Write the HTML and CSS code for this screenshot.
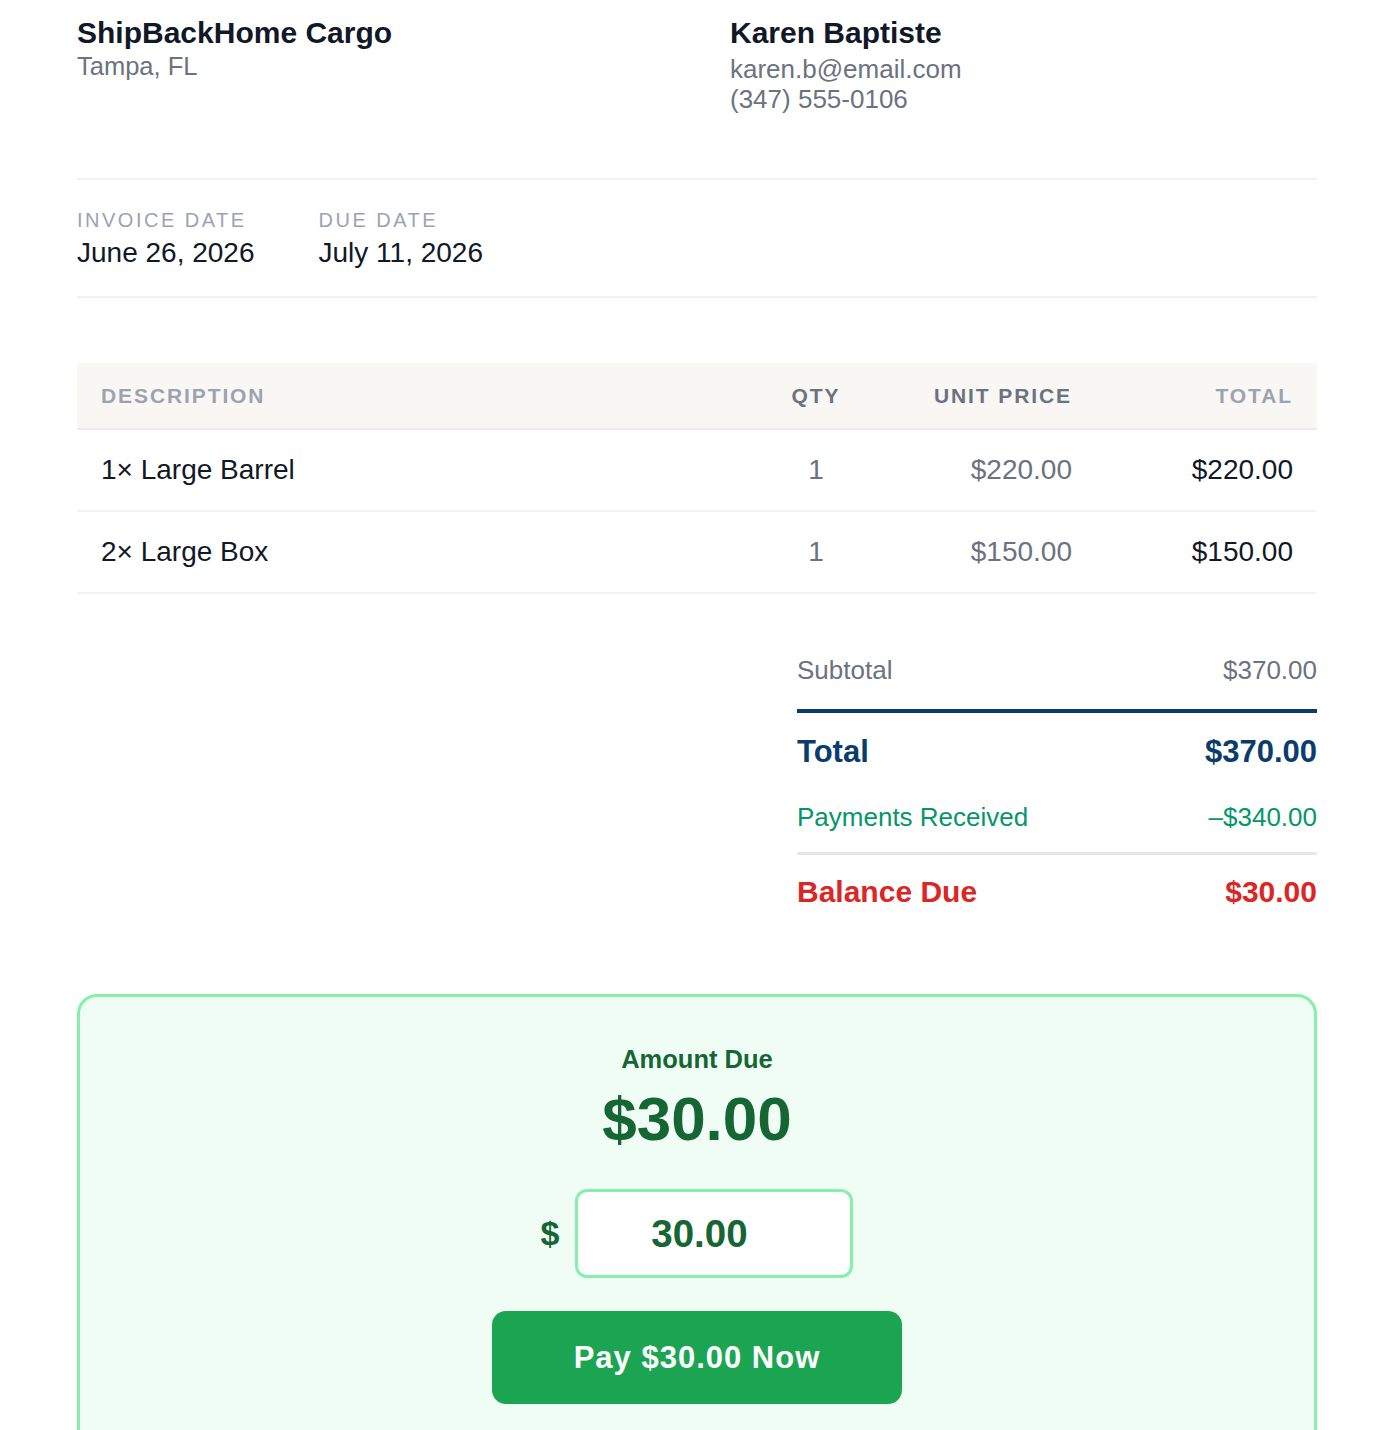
FILE: index.html
```html
<!DOCTYPE html>
<html lang="en">
<head>
    <meta charset="UTF-8">
    <meta name="viewport" content="width=device-width, initial-scale=1.0">
    <title>Invoice - ShipBackHome Cargo</title>
    <link rel="stylesheet" href="styles.css">
</head>
<body>
 <div class="page">

  <div class="top">
   <div class="party">
    <h2 class="party-name">ShipBackHome Cargo</h2>
    <div class="party-city">Tampa, FL</div>
   </div>
   <div class="party">
    <h2 class="party-name">Karen Baptiste</h2>
    <div class="party-line first">karen.b@email.com</div>
    <div class="party-line">(347) 555-0106</div>
   </div>
  </div>

  <div class="dates">
   <div class="date-item">
    <div class="date-label">INVOICE DATE</div>
    <div class="date-value">June 26, 2026</div>
   </div>
   <div class="date-item">
    <div class="date-label">DUE DATE</div>
    <div class="date-value">July 11, 2026</div>
   </div>
  </div>

  <div class="items">
   <div class="item-row head">
    <div class="c-desc">DESCRIPTION</div>
    <div class="c-qty">QTY</div>
    <div class="c-price">UNIT PRICE</div>
    <div class="c-total">TOTAL</div>
   </div>
   <div class="item-row">
    <div class="c-desc">1× Large Barrel</div>
    <div class="c-qty">1</div>
    <div class="c-price">$220.00</div>
    <div class="c-total">$220.00</div>
   </div>
   <div class="item-row">
    <div class="c-desc">2× Large Box</div>
    <div class="c-qty">1</div>
    <div class="c-price">$150.00</div>
    <div class="c-total">$150.00</div>
   </div>
  </div>

  <div class="summary">
   <div class="sum-row subtotal"><span>Subtotal</span><span>$370.00</span></div>
   <div class="sum-row total"><span>Total</span><span>$370.00</span></div>
   <div class="sum-row paid"><span>Payments Received</span><span>–$340.00</span></div>
   <div class="sum-row balance"><span>Balance Due</span><span>$30.00</span></div>
  </div>

  <div class="pay-card">
   <div class="pay-label">Amount Due</div>
   <div class="pay-amount">$30.00</div>
   <div class="pay-input-row">
    <span class="pay-currency">$</span>
    <input class="pay-input" type="text" value="30.00">
   </div>
   <button class="pay-button">Pay $30.00 Now</button>
  </div>

 </div>
</body>
</html>
```

FILE: styles.css
```css
body {
    margin: 0;
    font-family: "Liberation Sans", Arial, sans-serif;
    color: #111827;
    background: #ffffff;
}
.page {
    padding: 15px 73px 0 77px;
}

/* header */
.top {
    display: grid;
    grid-template-columns: 1fr 1fr;
    column-gap: 66px;
    padding-bottom: 64px;
    border-bottom: 2px solid #f1f1f1;
}
.party-name {
    margin: 0;
    font-size: 30px;
    line-height: 36px;
    font-weight: bold;
    color: #111827;
}
.party-city {
    font-size: 25.5px;
    line-height: 30px;
    color: #6b7280;
}
.party-line {
    font-size: 26px;
    line-height: 30px;
    color: #6b7280;
}
.party-line.first { margin-top: 3px; }

/* dates */
.dates {
    display: flex;
    gap: 64px;
    padding: 28px 0 27px;
    border-bottom: 2px solid #f1f1f1;
}
.date-label {
    font-size: 20px;
    line-height: 24px;
    letter-spacing: 2.5px;
    color: #9ca3af;
}
.date-value {
    margin-top: 5px;
    font-size: 28px;
    line-height: 32px;
    color: #111827;
}

/* line items */
.items { margin-top: 65px; }
.item-row {
    display: grid;
    grid-template-columns: 1fr 160px 200px 221px;
    align-items: center;
    height: 80px;
    border-bottom: 2px solid #f3f3f3;
    font-size: 28px;
}
.item-row.head {
    height: 65px;
    background: #f9f7f3;
    border-bottom: 2px solid #ebebeb;
    font-size: 21px;
    font-weight: bold;
    letter-spacing: 1.9px;
    color: #9ca3af;
}
.c-desc { padding-left: 24px; }
.c-qty { text-align: center; color: #6b7280; }
.c-price { text-align: right; padding-right: 24px; color: #6b7280; }
.c-total { text-align: right; padding-right: 24px; }

/* totals */
.summary {
    width: 520px;
    margin: 61px 0 0 auto;
}
.sum-row {
    display: flex;
    justify-content: space-between;
    align-items: center;
}
.subtotal {
    font-size: 26px;
    line-height: 30px;
    color: #6b7280;
    padding-bottom: 24px;
    border-bottom: 4px solid #0c3c6c;
}
.total {
    padding-top: 21px;
    font-size: 31px;
    line-height: 36px;
    font-weight: bold;
    color: #0c3c6c;
}
.paid {
    margin-top: 32px;
    padding-bottom: 20px;
    border-bottom: 3px solid #e5e7eb;
    font-size: 26px;
    line-height: 30px;
    color: #059669;
}
.balance {
    padding-top: 19px;
    font-size: 30px;
    line-height: 36px;
    font-weight: bold;
    color: #dc2626;
}

/* payment box */
.pay-card {
    margin-top: 84px;
    padding: 47px 0 60px;
    background: #f0fdf4;
    border: 3px solid #86efac;
    border-radius: 20px;
    text-align: center;
    color: #166534;
}
.pay-label {
    font-size: 25.5px;
    line-height: 30px;
    font-weight: bold;
}
.pay-amount {
    margin-top: 9px;
    font-size: 62px;
    line-height: 72px;
    font-weight: bold;
}
.pay-input-row {
    margin-top: 34px;
    display: flex;
    justify-content: center;
    align-items: center;
    gap: 16px;
}
.pay-currency {
    font-size: 34px;
    font-weight: bold;
}
.pay-input {
    box-sizing: border-box;
    width: 278px;
    height: 89px;
    padding: 0 30px 0 0;
    border: 3px solid #86efac;
    border-radius: 12px;
    background: #ffffff;
    text-align: center;
    font-family: "Liberation Sans", Arial, sans-serif;
    font-size: 38.5px;
    font-weight: bold;
    color: #166534;
    outline: none;
}
.pay-button {
    margin-top: 33px;
    width: 410px;
    height: 93px;
    border: none;
    border-radius: 14px;
    background: #1ba552;
    color: #ffffff;
    font-family: "Liberation Sans", Arial, sans-serif;
    font-size: 31px;
    font-weight: bold;
    letter-spacing: 1px;
    cursor: pointer;
}
```
